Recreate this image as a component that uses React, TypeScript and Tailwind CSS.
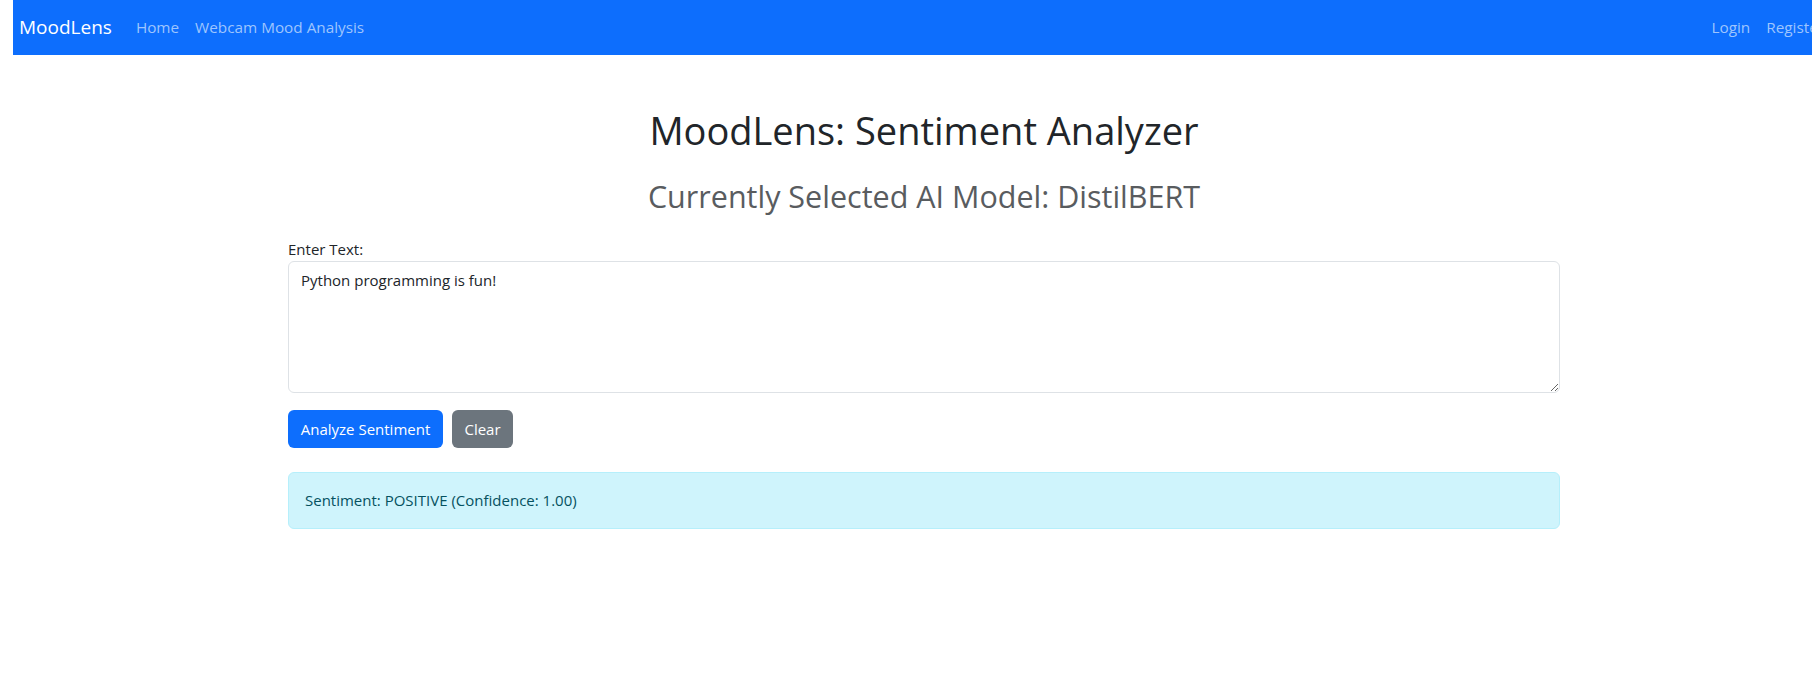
export default function App() {
  return (
    <div className="min-h-screen w-full overflow-hidden bg-white pl-[13px] font-['Open_Sans',sans-serif] text-[#212529]">
      {/* Navbar */}
      <nav className="flex h-[55px] w-[1825px] items-center justify-between bg-[#0d6efd] pl-[6px] pr-[14px]">
        <div className="flex items-center">
          <span className="mr-[24px] text-[19px] text-white">MoodLens</span>
          <div className="flex items-center gap-[16px] text-[15.3px] text-[#9ec5fe]">
            <span>Home</span>
            <span>Webcam Mood Analysis</span>
          </div>
        </div>
        <div className="flex items-center gap-[16px] text-[15.3px] text-[#9ec5fe]">
          <span>Login</span>
          <span>Register</span>
        </div>
      </nav>

      {/* Main */}
      <main className="ml-[275px] w-[1272px] pt-[51px]">
        <h1 className="text-center text-[38px] leading-[48px]">MoodLens: Sentiment Analyzer</h1>
        <h2 className="mt-[23px] text-center text-[30.5px] leading-[38px] text-[#595c5f]">
          Currently Selected AI Model: DistilBERT
        </h2>

        <form className="mt-[22px]">
          <label className="block text-[15px] leading-[24px]">Enter Text:</label>
          <textarea
            rows={5}
            defaultValue="Python programming is fun!"
            className="block h-[132px] w-full rounded-[6px] border border-[#dee2e6] px-[12px] py-[6px] text-[15px] leading-[24px] text-[#212529] outline-none"
          />
          <div className="mt-[17px] flex gap-[9px]">
            <button
              type="button"
              className="h-[38px] w-[155px] rounded-[6px] bg-[#0d6efd] text-[15px] text-white"
            >
              Analyze Sentiment
            </button>
            <button
              type="button"
              className="h-[38px] w-[61px] rounded-[6px] bg-[#6c757d] text-[15px] text-white"
            >
              Clear
            </button>
          </div>
        </form>

        <div className="mt-[24px] flex h-[57px] items-center rounded-[6px] border border-[#b6effb] bg-[#cff4fc] px-[16px] text-[15px] text-[#055160]">
          Sentiment: POSITIVE (Confidence: 1.00)
        </div>
      </main>
    </div>
  );
}
